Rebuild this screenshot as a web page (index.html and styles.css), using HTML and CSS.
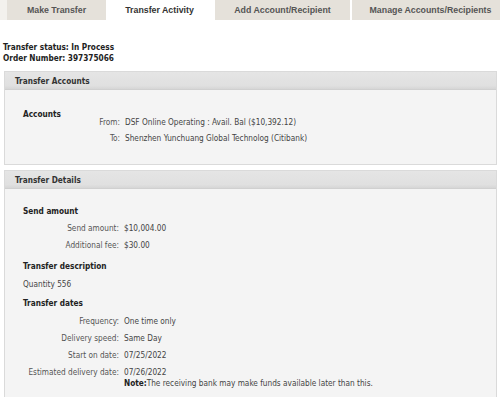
FILE: index.html
```html
<!DOCTYPE html>
<html>
<head>
<meta charset="utf-8">
<link rel="stylesheet" href="styles.css">
</head>
<body>
<div class="tabs">
  <div class="tab-lead"></div>
  <div class="tab t1">Make Transfer</div>
  <div class="tab t2 active">Transfer Activity</div>
  <div class="tab t3">Add Account/Recipient</div>
  <div class="tab t4">Manage Accounts/Recipients</div>
</div>

<div class="status">
  <div>Transfer status: In Process</div>
  <div>Order Number: 397375066</div>
</div>

<div class="panel p1">
  <div class="panel-head">Transfer Accounts</div>
  <div class="panel-body b1">
    <div class="heading">Accounts</div>
    <div class="row r-from"><span class="lbl">From:</span><span class="val">DSF Online Operating : Avail. Bal ($10,392.12)</span></div>
    <div class="row r-to"><span class="lbl">To:</span><span class="val">Shenzhen Yunchuang Global Technolog (Citibank)</span></div>
  </div>
</div>

<div class="panel p2">
  <div class="panel-head">Transfer Details</div>
  <div class="panel-body b2">
    <div class="heading">Send amount</div>
    <div class="row2 m6"><span class="lbl">Send amount:</span><span class="val">$10,004.00</span></div>
    <div class="row2 m6"><span class="lbl">Additional fee:</span><span class="val">$30.00</span></div>
    <div class="heading m10">Transfer description</div>
    <div class="plain m7">Quantity 556</div>
    <div class="heading m8">Transfer dates</div>
    <div class="row2 m7"><span class="lbl">Frequency:</span><span class="val">One time only</span></div>
    <div class="row2 m6"><span class="lbl">Delivery speed:</span><span class="val">Same Day</span></div>
    <div class="row2 m6"><span class="lbl">Start on date:</span><span class="val">07/25/2022</span></div>
    <div class="row2 m6"><span class="lbl">Estimated delivery date:</span><span class="val">07/26/2022<br><b>Note:</b>The receiving bank may make funds available later than this.</span></div>
  </div>
</div>
</body>
</html>
```

FILE: styles.css
```css
html, body {
  margin: 0;
  padding: 0;
  background: #ffffff;
}
body {
  font-family: "DejaVu Sans Condensed", "DejaVu Sans", Verdana, sans-serif;
  font-size: 8.2px;
  color: #333;
  width: 500px;
  overflow: hidden;
}
.tabs {
  display: flex;
  height: 20px;
  overflow: hidden;
}
.tab-lead {
  flex: none;
  width: 7px;
  background: #f3f1ed;
}
.tab {
  flex: none;
  font-family: "Liberation Sans", Arial, sans-serif;
  font-weight: bold;
  font-size: 8.8px;
  color: #555;
  background: #e5e1da;
  display: flex;
  align-items: center;
  justify-content: center;
}
.tab.active {
  background: #ffffff;
  color: #333;
}
.t1 { width: 99px; }
.t2 { width: 107px; }
.t3 { width: 135px; margin-left: 2px; }
.t4 { width: 157px; margin-left: 2px; }

.status {
  margin: 22px 0 0 3px;
  font-weight: bold;
  color: #222;
  line-height: 11px;
}
.panel {
  margin: 0 3px 0 4px;
  border: 1px solid #dadada;
  background: #f4f4f4;
}
.p1 { margin-top: 7px; }
.p2 { margin-top: 5px; }
.panel-head {
  height: 17px;
  line-height: 18px;
  padding-left: 10px;
  font-weight: bold;
  color: #333;
  background: linear-gradient(#e5e5e5, #e0e0e0 80%, #d6d6d6);
  border-bottom: 1px solid #d0d0d0;
}
.panel-body {
  line-height: 11px;
  white-space: nowrap;
}
.b1 { padding: 19px 0 20px 0; }
.b2 { padding: 17px 0 20px 0; }
.heading {
  font-weight: bold;
  color: #222;
  margin-left: 18px;
}
.plain {
  color: #444;
  margin-left: 18px;
}
.row, .row2 { display: flex; }
.r-from { margin-top: -3px; }
.r-to { margin-top: 5px; }
.lbl {
  flex: none;
  text-align: right;
  color: #555;
}
.row .lbl { width: 115px; }
.row2 .lbl { width: 114px; }
.val { margin-left: 5px; color: #444; }
.val b { color: #222; }
.m6 { margin-top: 6px; }
.m7 { margin-top: 7px; }
.m8 { margin-top: 8px; }
.m10 { margin-top: 10px; }
```
